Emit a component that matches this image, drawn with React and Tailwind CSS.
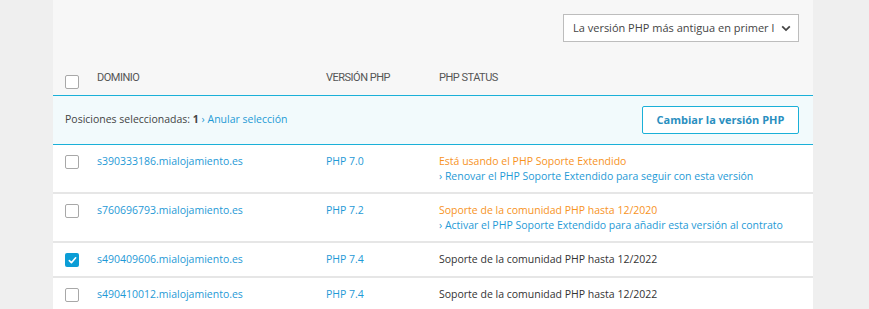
import React from 'react';

const rows = [
  {
    domain: 's390333186.mialojamiento.es',
    version: 'PHP 7.0',
    status: 'Está usando el PHP Soporte Extendido',
    warn: true,
    action: 'Renovar el PHP Soporte Extendido para seguir con esta versión',
  },
  {
    domain: 's760696793.mialojamiento.es',
    version: 'PHP 7.2',
    status: 'Soporte de la comunidad PHP hasta 12/2020',
    warn: true,
    action: 'Activar el PHP Soporte Extendido para añadir esta versión al contrato',
  },
  {
    domain: 's490409606.mialojamiento.es',
    version: 'PHP 7.4',
    status: 'Soporte de la comunidad PHP hasta 12/2022',
    checked: true,
  },
  {
    domain: 's490410012.mialojamiento.es',
    version: 'PHP 7.4',
    status: 'Soporte de la comunidad PHP hasta 12/2022',
  },
];

function Checkbox({ checked }) {
  if (checked) {
    return (
      <span className="flex h-[14px] w-[14px] items-center justify-center rounded-[2px] bg-[#0b9dd6]">
        <svg width="9" height="9" viewBox="0 0 10 10" fill="none">
          <path d="M1.5 5.2l2.3 2.3L8.5 2" stroke="#fff" strokeWidth="1.8" strokeLinecap="round" strokeLinejoin="round" />
        </svg>
      </span>
    );
  }
  return <span className="block h-[14px] w-[14px] rounded-[2px] border border-[#a8a8a8] bg-white" />;
}

export default function App() {
  return (
    <div className="min-h-screen bg-[#efefef] text-[10.5px] text-[#333] [font-family:'Open_Sans',sans-serif]">
      <div className="mx-[53px] w-[760px] bg-white">
        {/* toolbar */}
        <div className="bg-[#f7f7f7]">
          <div className="flex justify-end pr-[14px] pt-[14px]">
            <div className="flex h-[28px] w-[236px] items-center justify-between border border-[#bdbdbd] bg-white pl-[9px] pr-[7px]">
              <span className="whitespace-nowrap text-[11px] text-[#444]">La versión PHP más antigua en primer l</span>
              <svg width="10" height="7" viewBox="0 0 10 7" fill="none">
                <path d="M1.2 1.3L5 5.1l3.8-3.8" stroke="#444" strokeWidth="1.8" />
              </svg>
            </div>
          </div>
          <div className="grid h-[53px] grid-cols-[32px_229px_113px_1fr] items-start pl-[12px] pt-[28px] text-[11px] leading-[15px] tracking-[-0.5px] text-[#555] [font-family:Roboto,sans-serif]">
            <div className="pt-[5px]">
              <Checkbox />
            </div>
            <div>DOMINIO</div>
            <div>VERSIÓN PHP</div>
            <div>PHP STATUS</div>
          </div>
        </div>

        {/* selection bar */}
        <div className="flex h-[50px] items-center justify-between border-y-[1.5px] border-[#1ab0d8] bg-[#f2fafc] pl-[12px] pr-[14px]">
          <div className="text-[#444]">
            Posiciones seleccionadas: <span className="font-bold">1</span>{' '}
            <span className="text-[#1f9ad6]">› Anular selección</span>
          </div>
          <button className="h-[28px] w-[157px] rounded-[2px] border border-[#1ab0d8] bg-white text-[11px] font-bold text-[#2a8fbf]">
            Cambiar la versión PHP
          </button>
        </div>

        {/* rows */}
        {rows.map((r) => (
          <div
            key={r.domain}
            className={`grid grid-cols-[32px_229px_113px_1fr] border-b-2 border-[#e6e6e6] pl-[12px] pt-[9px] leading-[15px] ${r.action ? 'h-[49px]' : 'h-[35px]'}`}
          >
            <div className="pt-[1px]">
              <Checkbox checked={r.checked} />
            </div>
            <div className="text-[#1f9ad6]">{r.domain}</div>
            <div className="text-[#1f9ad6]">{r.version}</div>
            <div>
              <div className={r.warn ? 'text-[#f7931e]' : 'text-[#333]'}>{r.status}</div>
              {r.action && <div className="text-[#1f9ad6]">› {r.action}</div>}
            </div>
          </div>
        ))}
      </div>
    </div>
  );
}
